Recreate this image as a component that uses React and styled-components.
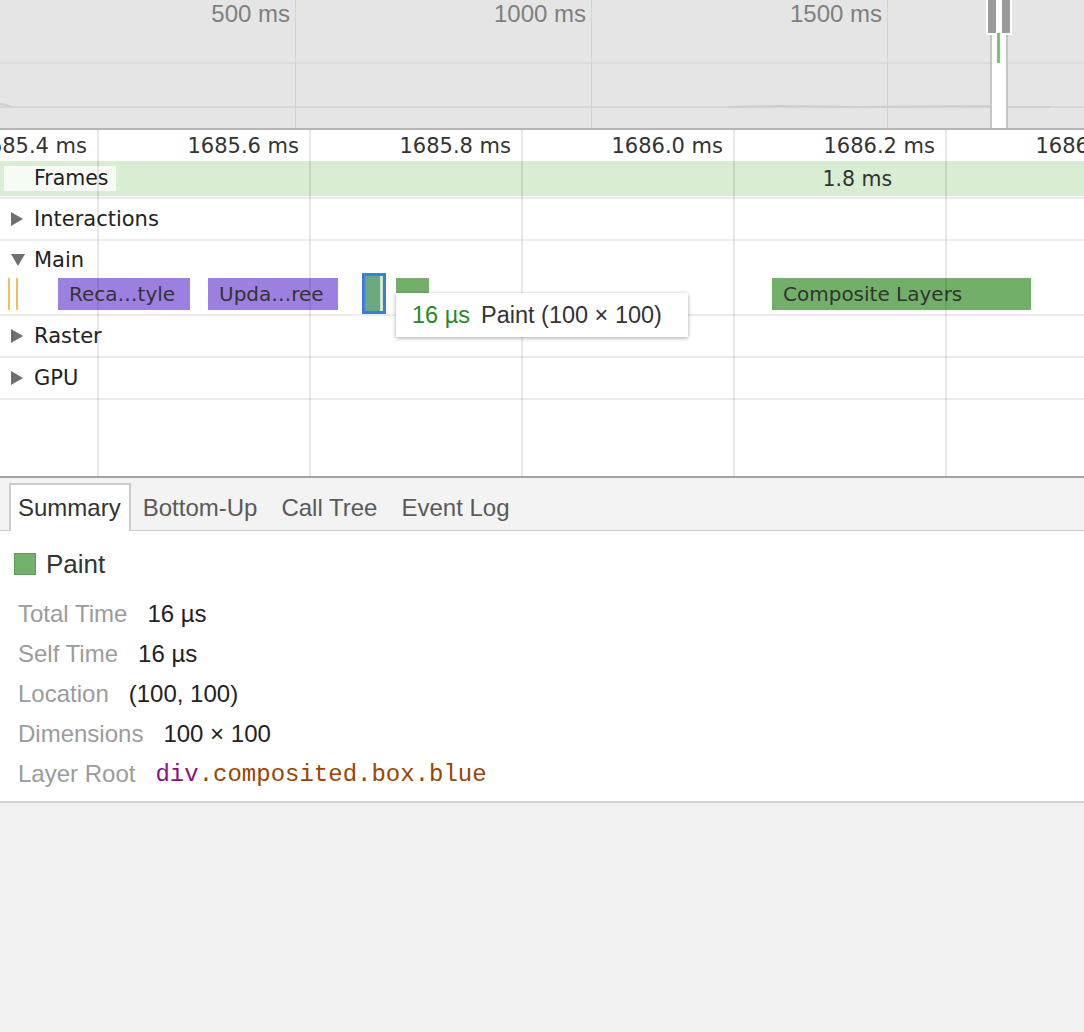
import React from "react";
import styled, { createGlobalStyle } from "styled-components";

const GlobalStyle = createGlobalStyle`
  html, body {
    margin: 0;
    padding: 0;
    background: #f2f2f2;
  }
  body {
    font-family: "Liberation Sans", Arial, sans-serif;
  }
`;

const Page = styled.div`
  display: flex;
  flex-direction: column;
  width: 1084px;
  height: 1032px;
  overflow: hidden;
  background: #f2f2f2;
`;

/* ---------- overview strip ---------- */

const Overview = styled.div`
  position: relative;
  flex: none;
  display: flex;
  height: 128px;
  background-color: #e5e5e5;
  background-image: linear-gradient(#dcdcdc, #dcdcdc),
    linear-gradient(#d7d7d7, #d7d7d7);
  background-size: 100% 2px, 100% 2px;
  background-position: 0 62px, 0 106px;
  background-repeat: no-repeat;
  border-bottom: 2px solid #b5b5b5;
`;

const OverviewCell = styled.div`
  flex: ${(p) => (p.$last ? "1" : "none")};
  width: 296px;
  box-sizing: border-box;
  display: flex;
  justify-content: flex-end;
  padding-right: 5px;
  border-right: ${(p) => (p.$last ? "none" : "1px solid #d3d3d3")};
  font-size: 24px;
  line-height: 28px;
  color: #7f7f7f;
  white-space: nowrap;
`;

const OverviewChart = styled.svg`
  position: absolute;
  left: 0;
  top: 0;
  pointer-events: none;
`;

const WindowHandle = styled.div`
  position: absolute;
  left: 986px;
  top: 0;
  display: flex;
  gap: 6px;
  padding: 0 2px 2px;
  height: 33px;
  background: #fff;
  z-index: 1;
`;

const HandleBar = styled.div`
  width: 8px;
  height: 100%;
  background: #9a9a9a;
`;

const WindowBody = styled.div`
  position: absolute;
  left: 990px;
  top: 35px;
  width: 14px;
  height: 93px;
  background: #fff;
  border-left: 2px solid #c6c6c6;
  border-right: 2px solid #c6c6c6;
`;

const WindowMark = styled.div`
  position: absolute;
  left: 997px;
  top: 33px;
  width: 3px;
  height: 30px;
  background: #74c874;
  z-index: 2;
`;

/* ---------- flame chart ---------- */

const Timeline = styled.div`
  position: relative;
  flex: none;
  height: 346px;
  background: #fff;
  overflow: hidden;
  font-family: "DejaVu Sans", "Liberation Sans", sans-serif;
  color: #222;
`;

const GridLines = styled.div`
  position: absolute;
  inset: 0;
  pointer-events: none;
  z-index: 1;
  background-image: linear-gradient(
    to right,
    rgba(0, 0, 0, 0.095) 0,
    rgba(0, 0, 0, 0.095) 2px,
    transparent 2px
  );
  background-size: 212px 100%;
  background-position: 97px 0;
`;

const Ruler = styled.div`
  display: flex;
  height: 31px;
  overflow: hidden;
  font-size: 21px;
  color: #333;
`;

const RulerCell = styled.div`
  flex: none;
  width: ${(p) => p.$w}px;
  box-sizing: border-box;
  display: flex;
  justify-content: flex-end;
  align-items: center;
  padding-right: 10px;
  white-space: nowrap;
`;

const FramesTrack = styled.div`
  padding-bottom: 1px;
  border-bottom: 2px solid #ececec;
`;

const FramesBar = styled.div`
  display: flex;
  align-items: center;
  height: 35px;
  background: #d9edd3;
  font-size: 20.5px;
`;

const FramesLabel = styled.div`
  margin-left: 4px;
  height: 25px;
  line-height: 25px;
  padding: 0 7px 0 30px;
  background: rgba(255, 255, 255, 0.78);
`;

const FrameBlock = styled.div`
  flex: 1;
  margin-left: 515px;
  text-align: center;
  color: #333;
`;

const Track = styled.div`
  border-bottom: 2px solid #ececec;
`;

const TrackHeader = styled.div`
  display: flex;
  align-items: center;
  gap: 11px;
  height: ${(p) => p.$h || 40}px;
  padding-left: 11px;
  font-size: 21px;
`;

const ArrowBox = styled.svg`
  flex: none;
  margin-right: ${(p) => (p.$open ? -2 : 0)}px;
`;

const BarLane = styled.div`
  position: relative;
  height: 32px;
  margin-bottom: 4px;
`;

const Bar = styled.div`
  position: absolute;
  top: ${(p) => (p.$selected ? -5 : 0)}px;
  height: ${(p) => (p.$selected ? 41 : 32)}px;
  box-sizing: border-box;
  background: ${(p) => p.$color};
  border: ${(p) => (p.$selected ? "3px solid #3b7dd8" : "none")};
  box-shadow: ${(p) => (p.$selected ? "inset -3px 0 0 #d3e8d3" : "none")};
  padding-left: ${(p) => (p.$text ? 11 : 0)}px;
  line-height: 32px;
  font-size: 20px;
  color: #333;
  white-space: nowrap;
  overflow: hidden;
`;

const Filler = styled.div`
  flex: 1;
`;

const Tooltip = styled.div`
  position: absolute;
  left: 396px;
  top: 163px;
  z-index: 2;
  display: flex;
  align-items: center;
  gap: 11px;
  width: 292px;
  height: 44px;
  box-sizing: border-box;
  padding-left: 16px;
  background: #fff;
  box-shadow: 0 1px 4px rgba(0, 0, 0, 0.35);
  font-family: "Liberation Sans", Arial, sans-serif;
  font-size: 23.5px;
  color: #333;
  white-space: nowrap;
`;

const TipTime = styled.span`
  color: #258a25;
`;

/* ---------- details ---------- */

const Details = styled.div`
  flex: none;
  display: flex;
  flex-direction: column;
  border-top: 2px solid #a4a4a4;
`;

const TabBar = styled.div`
  display: flex;
  align-items: flex-end;
  height: 52px;
  padding-left: 9px;
  background: #f3f3f3;
  border-bottom: 1px solid #cdcdcd;
`;

const Tab = styled.div`
  height: 48px;
  display: flex;
  align-items: center;
  box-sizing: border-box;
  padding: ${(p) => (p.$active ? "0 8px 0 7px" : "0 10px")};
  margin-bottom: -1px;
  border: 2px solid ${(p) => (p.$active ? "#cbcbcb" : "transparent")};
  border-bottom: none;
  background: ${(p) => (p.$active ? "#fff" : "transparent")};
  color: ${(p) => (p.$active ? "#333" : "#5a5a5a")};
  font-size: 24px;
`;

const Body = styled.div`
  height: 272px;
  box-sizing: border-box;
  padding: 22px 0 0 14px;
  background: #fff;
  border-bottom: 2px solid #d4d4d4;
`;

const Title = styled.div`
  display: flex;
  align-items: center;
  gap: 10px;
  height: 22px;
  font-size: 26px;
  color: #333;
  margin-bottom: 19px;
`;

const Swatch = styled.div`
  width: 22px;
  height: 22px;
  box-sizing: border-box;
  background: #73b06b;
  border: 1px solid #5f9b58;
`;

const Row = styled.div`
  display: flex;
  gap: 20px;
  height: 40px;
  align-items: center;
  padding-left: 4px;
  font-size: 24px;
`;

const RowLabel = styled.span`
  color: #9b9b9b;
`;

const RowValue = styled.span`
  color: #222;
`;

const NodeLink = styled.span`
  font-family: "Liberation Mono", "Courier New", monospace;
  font-size: 24px;
  color: #994500;
`;

const TagName = styled.span`
  color: #881280;
`;

const Arrow = ({ open }) =>
  open ? (
    <ArrowBox $open width="14" height="12" viewBox="0 0 14 12">
      <polygon points="0,0 14,0 7,12" fill="#6f6f6f" />
    </ArrowBox>
  ) : (
    <ArrowBox width="12" height="14" viewBox="0 0 12 14">
      <polygon points="0,0 12,7 0,14" fill="#6f6f6f" />
    </ArrowBox>
  );

const rulerLabels = [
  { w: 97, t: "1685.4 ms" },
  { w: 212, t: "1685.6 ms" },
  { w: 212, t: "1685.8 ms" },
  { w: 212, t: "1686.0 ms" },
  { w: 212, t: "1686.2 ms" },
  { w: 212, t: "1686.4 ms" },
];

const bars = [
  { left: 8, width: 2, color: "#f1c05a" },
  { left: 16, width: 2, color: "#f1c05a" },
  { left: 58, width: 132, color: "#9c80e0", text: "Reca…tyle" },
  { left: 208, width: 130, color: "#9c80e0", text: "Upda…ree" },
  { left: 362, width: 24, color: "#6aa87d", selected: true },
  { left: 396, width: 33, color: "#72b06a" },
  { left: 772, width: 259, color: "#72b06a", text: "Composite Layers" },
];

const details = [
  ["Total Time", "16 µs"],
  ["Self Time", "16 µs"],
  ["Location", "(100, 100)"],
  ["Dimensions", "100 × 100"],
];

const App = () => {
  return (
    <Page>
      <GlobalStyle />
      <Overview>
        <OverviewCell>500 ms</OverviewCell>
        <OverviewCell>1000 ms</OverviewCell>
        <OverviewCell>1500 ms</OverviewCell>
        <OverviewCell $last />
        <OverviewChart width="1084" height="128">
          <polyline
            points="0,104 6,105 12,107"
            fill="none"
            stroke="#cfcfcf"
            strokeWidth="2"
          />
          <polyline
            points="728,107 780,106 860,107 990,106 1010,107 1050,107"
            fill="none"
            stroke="#cdcdcd"
            strokeWidth="2"
          />
        </OverviewChart>
        <WindowBody />
        <WindowHandle>
          <HandleBar />
          <HandleBar />
        </WindowHandle>
        <WindowMark />
      </Overview>

      <Timeline>
        <Ruler>
          {rulerLabels.map((r) => (
            <RulerCell key={r.t} $w={r.w}>
              {r.t}
            </RulerCell>
          ))}
        </Ruler>
        <FramesTrack>
          <FramesBar>
            <FramesLabel>Frames</FramesLabel>
            <FrameBlock>1.8 ms</FrameBlock>
          </FramesBar>
        </FramesTrack>
        <Track>
          <TrackHeader>
            <Arrow />
            Interactions
          </TrackHeader>
        </Track>
        <Track>
          <TrackHeader $h={37}>
            <Arrow open />
            Main
          </TrackHeader>
          <BarLane>
            {bars.map((b, i) => (
              <Bar
                key={i}
                $color={b.color}
                $selected={b.selected}
                $text={!!b.text}
                style={{ left: b.left, width: b.width }}
              >
                {b.text}
              </Bar>
            ))}
          </BarLane>
        </Track>
        <Track>
          <TrackHeader>
            <Arrow />
            Raster
          </TrackHeader>
        </Track>
        <Track>
          <TrackHeader>
            <Arrow />
            GPU
          </TrackHeader>
        </Track>
        <Filler />
        <GridLines />
        <Tooltip>
          <TipTime>16 µs</TipTime>
          <span>Paint (100 × 100)</span>
        </Tooltip>
      </Timeline>

      <Details>
        <TabBar>
          <Tab $active>Summary</Tab>
          <Tab>Bottom-Up</Tab>
          <Tab>Call Tree</Tab>
          <Tab>Event Log</Tab>
        </TabBar>
        <Body>
          <Title>
            <Swatch />
            Paint
          </Title>
          {details.map(([label, value]) => (
            <Row key={label}>
              <RowLabel>{label}</RowLabel>
              <RowValue>{value}</RowValue>
            </Row>
          ))}
          <Row>
            <RowLabel>Layer Root</RowLabel>
            <NodeLink>
              <TagName>div</TagName>.composited.box.blue
            </NodeLink>
          </Row>
        </Body>
      </Details>
    </Page>
  );
};

export default App;
